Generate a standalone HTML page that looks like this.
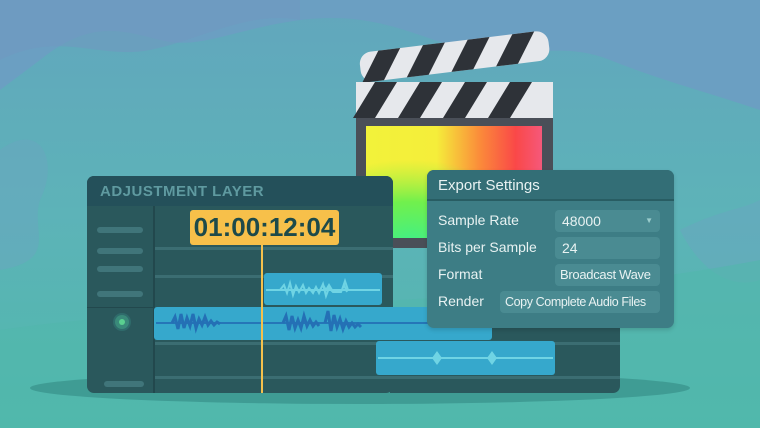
<!DOCTYPE html>
<html><head><meta charset="utf-8"><style>
*{margin:0;padding:0;box-sizing:border-box}
body{width:760px;height:428px;overflow:hidden;position:relative;font-family:"Liberation Sans",sans-serif;background:#5eafb8}
.a{position:absolute;white-space:nowrap}
.t{color:#e8f2f2;font-size:14px}
.box{position:absolute;white-space:nowrap;overflow:hidden;background:#4a8b92;border-radius:4px;color:#e8f2f2;font-size:14px;padding-left:7px;line-height:22px;height:22px}
</style></head><body>
<svg class="a" style="left:0;top:0" width="760" height="428">
<defs><linearGradient id="bg" x1="0" y1="0" x2="0" y2="1"><stop offset="0" stop-color="#62a6bd"/><stop offset=".5" stop-color="#5db3b8"/><stop offset="1" stop-color="#4fb8ab"/></linearGradient>
<linearGradient id="scr" x1="0" y1="0" x2="1" y2="0"><stop offset="0" stop-color="#f2f23a"/><stop offset=".4" stop-color="#f5ee3a"/><stop offset=".65" stop-color="#fb8a3a"/><stop offset=".85" stop-color="#fa4848"/><stop offset="1" stop-color="#f5587a"/></linearGradient>
<radialGradient id="scr2" cx=".25" cy="1.05" r=".75"><stop offset="0" stop-color="#3ef08a"/><stop offset=".5" stop-color="#5af050" stop-opacity=".85"/><stop offset="1" stop-color="#8af040" stop-opacity="0"/></radialGradient>
</defs>
<rect width="760" height="428" fill="url(#bg)"/>
<path d="M0 0H760V110C700 90 660 80 610 60C560 40 520 60 470 50C420 40 380 10 300 20C230 30 200 50 160 40C120 30 90 20 40 60L0 90Z" fill="#6b9fc2"/>
<path d="M0 60C60 30 100 60 150 50C200 40 250 10 300 20L300 0H0Z" fill="#7099c0" opacity=".6"/>
<path d="M0 150C40 120 60 160 40 200C30 230 60 260 0 270Z" fill="#6aa5c0" opacity=".5"/>
<path d="M680 230C720 210 740 210 760 200V280C730 290 700 270 680 230Z" fill="#6aa5c0" opacity=".5"/>
<path d="M0 330C200 300 500 310 760 260V428H0Z" fill="#52b7ac" opacity=".6"/>
<ellipse cx="360" cy="388" rx="330" ry="16" fill="#3f9c94"/>
<g transform="rotate(-7 450 60)">
<rect x="360" y="42" width="190" height="30" rx="12" fill="#e6e8ec"/>
<path d="M380 42h22l-20 30h-22zM425 42h22l-20 30h-22zM470 42h22l-20 30h-22zM515 42h22l-20 30h-22z" fill="#2e3238"/>
</g>
<rect x="356" y="82" width="197" height="166" rx="5" fill="#4a4f58"/>
<rect x="356" y="82" width="197" height="36" fill="#e6e8ec"/>
<path d="M375 82h22l-22 36h-22zM420 82h22l-22 36h-22zM465 82h22l-22 36h-22zM510 82h22l-22 36h-22z" fill="#2e3238"/>
<rect x="366" y="126" width="176" height="112" fill="url(#scr)"/>
<rect x="366" y="126" width="176" height="112" fill="url(#scr2)"/>
</svg>
<div class="a" style="left:87px;top:176px;width:306px;height:217px;background:#2a585c;border-radius:7px"></div>
<div class="a" style="left:390px;top:320px;width:230px;height:73px;background:#2a585c;border-radius:0 0 7px 0"></div>
<div class="a" style="left:87px;top:176px;width:306px;height:30px;background:#24505a;border-radius:7px 7px 0 0"></div>
<div class="a" style="left:100px;top:183px;font-size:15px;font-weight:bold;color:#5f9aa0;letter-spacing:.5px">ADJUSTMENT LAYER</div>
<div class="a" style="left:153px;top:206px;width:2px;height:187px;background:#22484d"></div>
<div class="a" style="left:87px;top:307px;width:66px;height:1px;background:#22484d"></div>
<div class="a" style="left:97px;top:227px;width:46px;height:6px;border-radius:3px;background:#40757a"></div>
<div class="a" style="left:97px;top:248px;width:46px;height:6px;border-radius:3px;background:#40757a"></div>
<div class="a" style="left:97px;top:266px;width:46px;height:6px;border-radius:3px;background:#40757a"></div>
<div class="a" style="left:97px;top:291px;width:46px;height:6px;border-radius:3px;background:#40757a"></div>
<div class="a" style="left:104px;top:381px;width:40px;height:6px;border-radius:3px;background:#40757a"></div>
<div class="a" style="left:115px;top:315px;width:14px;height:14px;border-radius:50%;background:#3a8a7a;box-shadow:0 0 0 2px #2f6b6b"></div>
<div class="a" style="left:119px;top:319px;width:6px;height:6px;border-radius:50%;background:#5ad090"></div>
<div class="a" style="left:155px;top:247px;width:238px;height:3px;background:#3b6d72"></div>
<div class="a" style="left:155px;top:275px;width:238px;height:3px;background:#3b6d72"></div>
<div class="a" style="left:155px;top:342px;width:465px;height:3px;background:#3b6d72"></div>
<div class="a" style="left:155px;top:376px;width:465px;height:3px;background:#3b6d72"></div>
<div class="a" style="left:264px;top:273px;width:118px;height:32px;background:#36a8cc;border-radius:3px"></div>
<div class="a" style="left:154px;top:307px;width:338px;height:33px;background:#36a8cc;border-radius:3px"></div>
<div class="a" style="left:376px;top:341px;width:179px;height:34px;background:#36a8cc;border-radius:3px"></div>
<svg class="a" style="left:0;top:0" width="760" height="428">
<line x1="266" y1="290" x2="380" y2="290" stroke="#6fd4e4" stroke-width="2"/>
<path d="M280 290l4-5 3 8 3-10 3 12 3-9 3 6 4-7 3 8 3-5 4 5 3-6 3 6 4-9 3 12 3-8 4 4 8 0 3-7 3 7" stroke="#6fd4e4" stroke-width="2" fill="none"/>
<path d="M320 290l3-5 3 5 3-5 3 5 10 0 3-9 3 9" stroke="#6fd4e4" fill="none" stroke-width="2"/>
<line x1="156" y1="323" x2="490" y2="323" stroke="#2576b8" stroke-width="2"/>
<path d="M172 323l3-6 3 12 3-15 3 14 3-10 3 8 3-12 3 14 3-9 3 6 3-8 3 8 3-4 3 4 3-3 3 2M283 323l3-7 3 14 3-14 3 12 3-8 3 8 3-12 3 10 3-6 3 6 3-4 3 4M325 323l3-12 3 20 3-16 3 12 3-8 3 10 3-8 3 6 3-4 3 4 3-3 3 3" stroke="#2470b5" stroke-width="3" fill="none"/>
<line x1="378" y1="358" x2="553" y2="358" stroke="#6fd4e4" stroke-width="2"/>
<path d="M432 358l5-7 5 7-5 7zM487 358l5-7 5 7-5 7z" fill="#6fd4e4"/>
<line x1="262" y1="244" x2="262" y2="393" stroke="#f5c14c" stroke-width="2"/>
</svg>
<div class="a" style="left:190px;top:210px;width:149px;height:35px;background:#f7c04a;border-radius:3px;color:#1d4a4a;font-size:26px;font-weight:bold;text-align:center;line-height:35px">01:00:12:04</div>
<div class="a" style="left:427px;top:170px;width:247px;height:158px;background:#3d7d85;border-radius:7px;box-shadow:0 2px 4px rgba(0,0,0,.15)"></div>
<div class="a" style="left:427px;top:170px;width:247px;height:31px;background:#336e76;border-radius:7px 7px 0 0;border-bottom:2px solid #285d63"></div>
<div class="a t" style="left:438px;top:177px;font-size:15px">Export Settings</div>
<div class="a t" style="left:438px;top:212px">Sample Rate</div>
<div class="a t" style="left:438px;top:239px">Bits per Sample</div>
<div class="a t" style="left:438px;top:266px">Format</div>
<div class="a t" style="left:438px;top:293px">Render</div>
<div class="box" style="left:555px;top:210px;width:105px">48000<span style="position:absolute;right:7px;top:0;font-size:8px;color:#9cc">▼</span></div>
<div class="box" style="left:555px;top:237px;width:105px">24</div>
<div class="box" style="left:555px;top:264px;width:105px;font-size:13px;padding-left:5px;letter-spacing:-.3px">Broadcast Wave</div>
<div class="box" style="left:500px;top:291px;width:160px;font-size:12.5px;padding-left:5px;letter-spacing:-.4px">Copy Complete Audio Files</div>
</body></html>
